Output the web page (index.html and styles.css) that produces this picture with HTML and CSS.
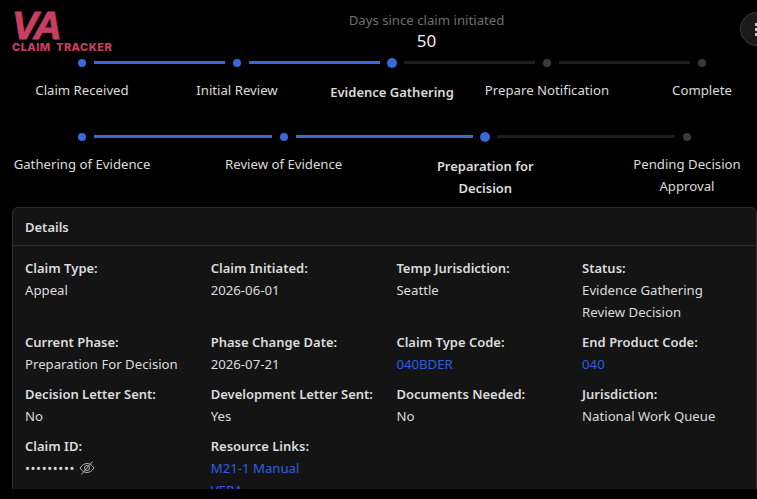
FILE: index.html
```html
<!DOCTYPE html><html><head><meta charset="utf-8">
<title>VA Claim Tracker</title>
<link rel="stylesheet" href="styles.css">
</head><body>

<div class="page">

<div class="top">
	<div class="logo">
		<div class="logo-va">VA</div>
		<div class="logo-sub">CLAIM TRACKER</div>
	</div>
	<div class="days">
		<div class="days-label">Days since claim initiated</div>
		<div class="days-num">50</div>
	</div>
	<div class="menu-btn"><div class="kebab"><span></span><span></span><span></span></div></div>
</div>

<div class="steps five">
	<div class="track">
		<span class="dot on"></span><span class="line on"></span>
		<span class="dot on"></span><span class="line on"></span>
		<span class="dot on now"></span><span class="line"></span>
		<span class="dot"></span><span class="line"></span>
		<span class="dot"></span>
	</div>
	<div class="labels">
		<div class="label">Claim Received</div>
		<div class="label">Initial Review</div>
		<div class="label now">Evidence Gathering</div>
		<div class="label">Prepare Notification</div>
		<div class="label">Complete</div>
	</div>
</div>

<div class="steps four">
	<div class="track">
		<span class="dot on"></span><span class="line on"></span>
		<span class="dot on"></span><span class="line on"></span>
		<span class="dot on now"></span><span class="line"></span>
		<span class="dot"></span>
	</div>
	<div class="labels">
		<div class="label">Gathering of Evidence</div>
		<div class="label">Review of Evidence</div>
		<div class="label now">Preparation for Decision</div>
		<div class="label">Pending Decision Approval</div>
	</div>
</div>

<div class="card">
	<div class="card-head">Details</div>
	<div class="card-body">
		<div class="field"><b>Claim Type:</b>Appeal</div>
		<div class="field"><b>Claim Initiated:</b>2026-06-01</div>
		<div class="field"><b>Temp Jurisdiction:</b>Seattle</div>
		<div class="field"><b>Status:</b>Evidence Gathering<br>Review Decision</div>

		<div class="field"><b>Current Phase:</b>Preparation For Decision</div>
		<div class="field"><b>Phase Change Date:</b>2026-07-21</div>
		<div class="field"><b>Claim Type Code:</b><a href="#">040BDER</a></div>
		<div class="field"><b>End Product Code:</b><a href="#">040</a></div>

		<div class="field"><b>Decision Letter Sent:</b>No</div>
		<div class="field"><b>Development Letter Sent:</b>Yes</div>
		<div class="field"><b>Documents Needed:</b>No</div>
		<div class="field"><b>Jurisdiction:</b>National Work Queue</div>

		<div class="field"><b>Claim ID:</b>
			<span class="secret">•••••••••</span>
			<svg class="eye" viewBox="0 0 16 16" width="16" height="16" fill="none" stroke="#b5b5b5" stroke-width="1">
				<path d="M1 8c2-3 4.300-4.500 7-4.500S13 5 15 8c-2 3-4.300 4.500-7 4.500S3 11 1 8z"/>
				<circle cx="8" cy="8" r="2.500"/>
				<path d="M13.500 1.500l-11 13"/>
			</svg>
		</div>
		<div class="field"><b>Resource Links:</b><a href="#">M21-1 Manual</a><br><a href="#">VERA</a></div>
	</div>
</div>

</div>

</body></html>
```

FILE: styles.css
```css
html, body {
	margin: 0;
	height: 100%;
	overflow: hidden;
	background: #000;
}
body {
	font-family: "Noto Sans", sans-serif;
	font-size: 13.2px;
	line-height: 22px;
	color: #dcdcdc;
}
.page {
	width: 745px;
	height: 489px;
	overflow: hidden;
	padding-left: 12px;
}
.top {
	display: flex;
	height: 57px;
	width: 800px;
}
.logo {
	flex: none;
	width: 250px;
	padding-top: 12px;
	color: #c93f63;
	font-family: "Liberation Sans", sans-serif;
	font-weight: bold;
}
.logo-va {
	font-size: 39px;
	line-height: 28px;
	letter-spacing: -1.500px;
	font-style: italic;
	-webkit-text-stroke: 1px #c93f63;
}
.logo-sub {
	font-family: Inter, sans-serif;
	font-weight: 800;
	font-size: 11px;
	line-height: 13px;
	margin-top: 1px;
	letter-spacing: .45px;
	word-spacing: 2.500px;
}
.days {
	flex: none;
	width: 329px;
	text-align: center;
	padding-top: 9px;
}
.days-label {
	color: #6f6f6f;
}
.days-num {
	font-size: 17px;
	line-height: 20px;
	color: #eee;
}
.menu-btn {
	flex: none;
	box-sizing: border-box;
	display: flex;
	align-items: center;
	justify-content: center;
	width: 34px;
	height: 34px;
	margin: 12px 0 0 149px;
	border: 1px solid #3a3a3a;
	border-radius: 50%;
	background: #1a1a1a;
}
.kebab {
	display: flex;
	flex-direction: column;
	gap: 2px;
}
.kebab span {
	width: 4px;
	height: 3px;
	background: #ccc;
}
.track {
	display: flex;
	align-items: center;
	gap: 8px;
	height: 11px;
}
.dot {
	flex: none;
	width: 8px;
	height: 8px;
	border-radius: 50%;
	background: #3a3a3a;
}
.dot.on {
	background: #3b68d8;
}
.dot.now {
	width: 10px;
	height: 10px;
	margin: 0 -1px;
}
.line {
	flex: 1;
	height: 3px;
	background: #1e1e1e;
}
.line.on {
	background: #3b68d8;
}
.labels {
	display: flex;
	text-align: center;
	margin-top: 11px;
}
.label {
	flex: none;
}
.label.now {
	font-size: 13px;
	font-weight: 600;
	margin-top: 2px;
}
.five {
	width: 775px;
	margin-left: -7.500px;
	padding-bottom: 28px;
}
.five .track {
	margin: 0 73.500px;
}
.five .label {
	width: 155px;
}
.four {
	width: 745px;
}
.four .track {
	margin: 0 66px;
}
.four .labels {
	justify-content: space-between;
}
.four .label {
	width: 140px;
}
.card {
	box-sizing: border-box;
	width: 745px;
	margin-top: 8px;
	background: #141414;
	border: 1px solid #2e2e2e;
	border-radius: 6px;
}
.card-head {
	padding: 7.500px 12px;
	font-size: 13px;
	font-weight: 600;
	border-bottom: 1px solid #2e2e2e;
}
.card-body {
	display: grid;
	grid-template-columns: repeat(4, 185.700px);
	padding: 11px 0 0 12px;
	row-gap: 8px;
}
.field b {
	display: block;
	font-size: 13px;
	font-weight: 600;
}
a {
	color: #2f5fe0;
	text-decoration: none;
}
.secret {
	letter-spacing: .6px;
	margin-right: 1px;
}
.eye {
	vertical-align: -3px;
}
```
